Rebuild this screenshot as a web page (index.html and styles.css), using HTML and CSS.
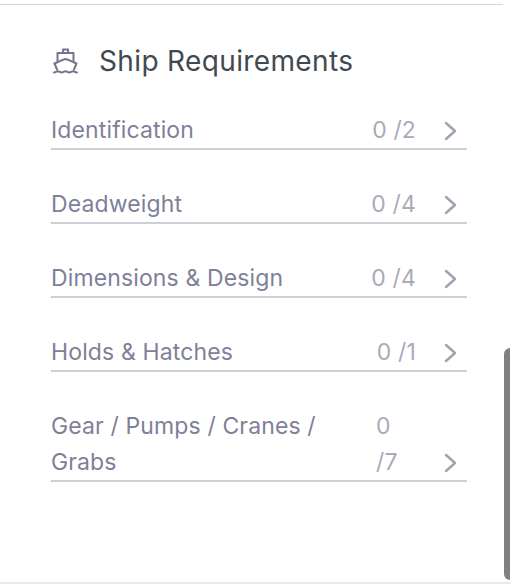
FILE: index.html
```html
<!DOCTYPE html>
<html lang="en">
<head>
<meta charset="utf-8">
<title>Ship Requirements</title>
<link rel="stylesheet" href="styles.css">
</head>
<body>
<main class="panel">
  <header class="heading">
    <svg class="ship" viewBox="0 0 25 26" fill="none" stroke="currentColor" stroke-width="2" stroke-linecap="round" stroke-linejoin="round">
      <path d="M10 5V1.500h5V5"/>
      <path d="M4.500 13V5h16v8"/>
      <path d="M1.500 15.500C6 14 9 11.500 12.500 11c3.500.5 6.500 3 11 4.500l-2.500 6"/>
      <path d="M1.500 15.500 4 21.500"/>
      <path d="M1 24.500c2 0 2-1.200 3.900-1.200s1.900 1.200 3.800 1.200 1.900-1.200 3.800-1.200 1.900 1.200 3.800 1.200 1.900-1.200 3.800-1.200 1.900 1.200 3.900 1.200"/>
    </svg>
    <h1 class="title">Ship Requirements</h1>
  </header>
  <ul class="rows">
    <li class="row"><span class="label">Identification</span><span class="count">0 /2</span><svg class="chev" viewBox="0 0 13 20" fill="none" stroke="currentColor" stroke-width="2.400" stroke-linecap="round" stroke-linejoin="round"><path d="M2 2l9 8-9 8"/></svg></li>
    <li class="row"><span class="label">Deadweight</span><span class="count">0 /4</span><svg class="chev" viewBox="0 0 13 20" fill="none" stroke="currentColor" stroke-width="2.400" stroke-linecap="round" stroke-linejoin="round"><path d="M2 2l9 8-9 8"/></svg></li>
    <li class="row"><span class="label">Dimensions &amp; Design</span><span class="count">0 /4</span><svg class="chev" viewBox="0 0 13 20" fill="none" stroke="currentColor" stroke-width="2.400" stroke-linecap="round" stroke-linejoin="round"><path d="M2 2l9 8-9 8"/></svg></li>
    <li class="row"><span class="label">Holds &amp; Hatches</span><span class="count">0 /1</span><svg class="chev" viewBox="0 0 13 20" fill="none" stroke="currentColor" stroke-width="2.400" stroke-linecap="round" stroke-linejoin="round"><path d="M2 2l9 8-9 8"/></svg></li>
    <li class="row"><span class="label label-wrap">Gear / Pumps / Cranes / Grabs</span><span class="count count-wrap">0 /7</span><svg class="chev" viewBox="0 0 13 20" fill="none" stroke="currentColor" stroke-width="2.400" stroke-linecap="round" stroke-linejoin="round"><path d="M2 2l9 8-9 8"/></svg></li>
  </ul>
</main>
<div class="scrollbar"></div>
<div class="footer-line"></div>
</body>
</html>
```

FILE: styles.css
```css
* { box-sizing: border-box; }
html, body { margin: 0; padding: 0; height: 100%; background: #fff; overflow: hidden; }
body { font-family: Inter, "Liberation Sans", sans-serif; position: relative; }
.panel {
  width: 503px;
  height: 577px;
  margin-top: 4px;
  padding: 0 36px 0 51px;
  border-top: 1px solid #d4d4dc;
}
.heading { display: flex; align-items: center; height: 39px; margin-top: 36px; padding-left: 2px; }
.ship { width: 25px; height: 26px; color: #74748f; flex: none; }
.title { margin: 2px 0 0 21px; font-size: 28px; letter-spacing: .36px; line-height: 39px; font-weight: 400; color: #3f4952; }
.rows { list-style: none; margin: 32px 0 0; padding: 0; }
.row {
  display: flex;
  align-items: flex-end;
  border-bottom: 2px solid #cfcfd6;
  margin-bottom: 36px;
  font-size: 23px;
  letter-spacing: .13px;
  line-height: 36px;
}
.label { flex: 1; color: #7f7f99; }
.label-wrap { flex: none; width: 280px; }
.count { color: #aaaab8; margin-right: 28px; white-space: nowrap; }
.count-wrap { white-space: normal; width: 40px; margin-left: auto; }
.chev { width: 13px; height: 20px; color: #a1a1af; margin: 0 10px 7px 0; flex: none; }
.footer-line { height: 2px; background: #e8e8ee; margin-top: 1px; }
.scrollbar {
  position: absolute;
  top: 348px;
  right: 0;
  width: 6px;
  height: 232px;
  background: #808080;
  border-radius: 6px 0 0 6px;
}
```
